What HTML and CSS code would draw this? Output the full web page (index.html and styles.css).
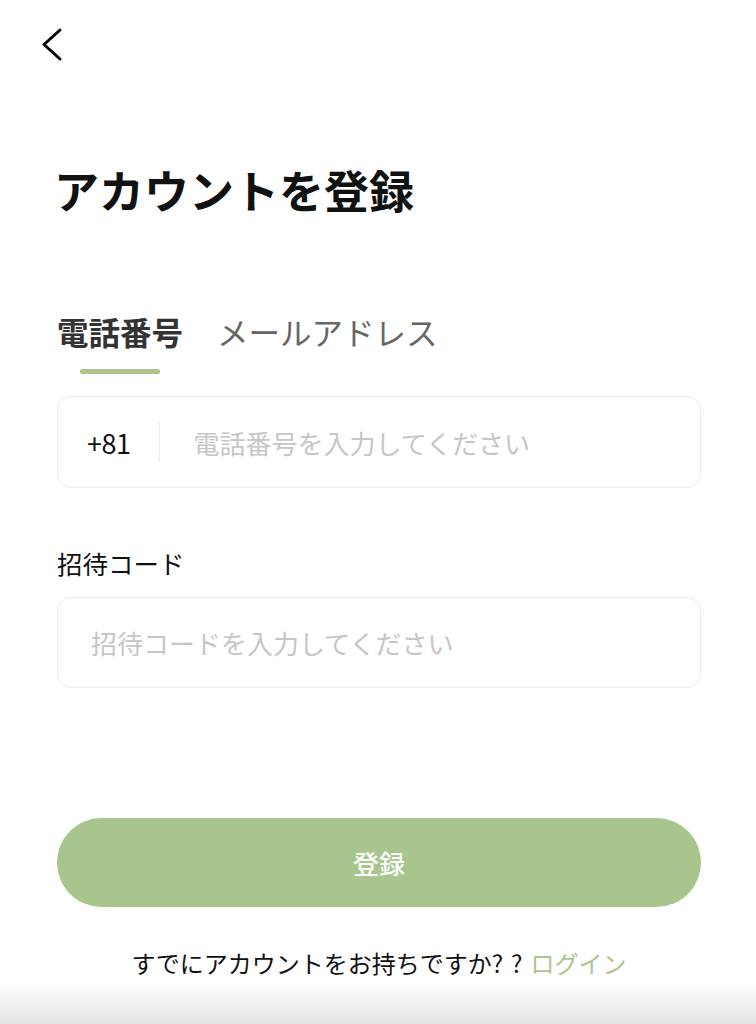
FILE: index.html
```html
<!DOCTYPE html>
<html lang="ja">
<head>
<meta charset="utf-8">
<title>アカウントを登録</title>
<link rel="stylesheet" href="styles.css">
</head>
<body>
<div class="page">
  <div class="header">
    <svg class="back" width="26" height="38" viewBox="0 0 26 38" fill="none">
      <path d="M20 4 L4 18.5 L20 33" stroke="#000" stroke-width="3" stroke-linecap="round" stroke-linejoin="round"/>
    </svg>
  </div>
  <h1 class="title">アカウントを登録</h1>
  <div class="tabs">
    <div class="tab active"><span>電話番号</span><i class="bar"></i></div>
    <div class="tab"><span>メールアドレス</span></div>
  </div>
  <div class="field phone">
    <span class="code">+81</span>
    <span class="divider"></span>
    <input class="input" type="text" placeholder="電話番号を入力してください">
  </div>
  <div class="label">招待コード</div>
  <div class="field invite">
    <input class="input" type="text" placeholder="招待コードを入力してください">
  </div>
  <button class="submit">登録</button>
  <p class="login">すでにアカウントをお持ちですか<span class="q">??</span><a class="link">ログイン</a></p>
</div>
<div class="fade"></div>
</body>
</html>
```
FILE: styles.css
```css
html, body {
  margin: 0;
  padding: 0;
  background: #fff;
}
body {
  font-family: "Noto Sans CJK JP", "Noto Sans", sans-serif;
  color: #111;
  height: 1024px;
  overflow: hidden;
  position: relative;
}
.page {
  padding: 0 55px 0 57px;
  display: flex;
  flex-direction: column;
}
.header {
  height: 90px;
  padding: 26px 0 0 0;
  margin-left: -17px;
  box-sizing: border-box;
}
.back {
  display: block;
}
.title {
  margin: 77px 0 0 -3px;
  font-size: 45px;
  line-height: 45px;
  font-weight: 700;
  color: #111;
}
.tabs {
  margin-top: 103px;
  display: flex;
  gap: 34px;
  padding-left: 0;
}
.tab {
  display: flex;
  flex-direction: column;
  align-items: center;
  gap: 22px;
  font-size: 31.5px;
  line-height: 32px;
  color: #666;
}
.tab.active {
  font-weight: 700;
  color: #333;
}
.bar {
  display: block;
  width: 80px;
  height: 5px;
  border-radius: 3px;
  background: #a8c58e;
}
.field {
  box-sizing: border-box;
  border: 1px solid #ebebeb;
  border-radius: 14px;
  display: flex;
  align-items: center;
}
.phone {
  margin-top: 22px;
  height: 92px;
  padding-left: 29px;
}
.code {
  font-size: 27px;
  color: #111;
  letter-spacing: -0.5px;
}
.divider {
  width: 1px;
  height: 40px;
  background: #ececec;
  margin: 0 33px 0 29px;
}
.input {
  flex: 1;
  border: none;
  outline: none;
  background: transparent;
  font-family: "Noto Sans CJK JP", "Noto Sans", sans-serif;
  font-size: 26px;
  color: #111;
  padding: 0;
  min-width: 0;
}
.input::placeholder {
  color: #c6c6c6;
}
.label {
  margin-top: 62px;
  font-size: 25.5px;
  line-height: 25px;
  color: #111;
  padding-left: 0;
}
.invite {
  margin-top: 22px;
  height: 91px;
  padding-left: 33px;
}
.submit {
  margin-top: 130px;
  height: 89px;
  border: none;
  border-radius: 45px;
  background: #a8c58e;
  color: #fff;
  font-family: "Noto Sans CJK JP", "Noto Sans", sans-serif;
  font-size: 26px;
  font-weight: 500;
  padding: 0;
}
.login {
  margin: 43px 0 0 0;
  text-align: center;
  font-size: 24px;
  line-height: 25px;
  color: #111;
}
.q {
  letter-spacing: 8px;
}
.link {
  color: #a8c58e;
}
.fade {
  position: absolute;
  left: 0;
  right: 0;
  bottom: 0;
  height: 42px;
  background: linear-gradient(to bottom, rgba(232,232,232,0), #e3e3e3);
}
```
